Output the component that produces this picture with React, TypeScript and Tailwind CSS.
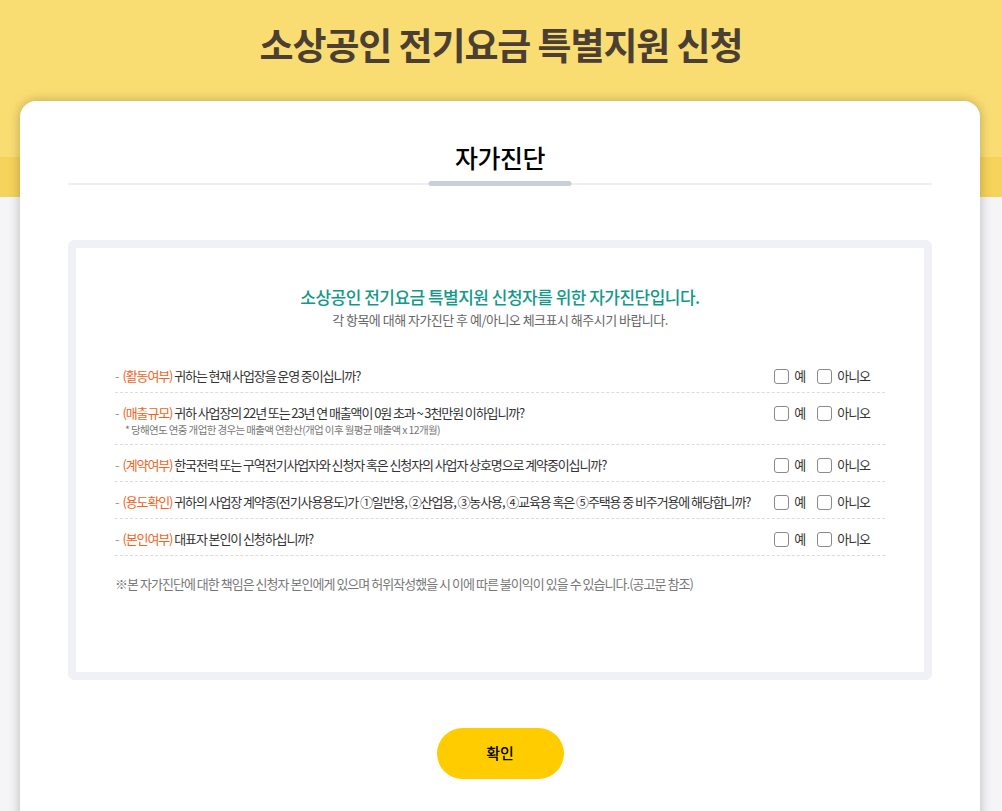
const FONT = "font-['Noto_Sans_CJK_KR','Noto_Sans',sans-serif]"

interface Question {
  tag: string
  text: string
  note?: string
}

const QUESTIONS: Question[] = [
  { tag: '(활동여부)', text: '귀하는 현재 사업장을 운영 중이십니까?' },
  {
    tag: '(매출규모)',
    text: '귀하 사업장의 22년 또는 23년 연 매출액이 0원 초과 ~ 3천만원 이하입니까?',
    note: '* 당해연도 연중 개업한 경우는 매출액 연환산(개업 이후 월평균 매출액 x 12개월)',
  },
  { tag: '(계약여부)', text: '한국전력 또는 구역전기사업자와 신청자 혹은 신청자의 사업자 상호명으로 계약중이십니까?' },
  {
    tag: '(용도확인)',
    text: '귀하의 사업장 계약종(전기사용용도)가 ①일반용, ②산업용, ③농사용, ④교육용 혹은 ⑤주택용 중 비주거용에 해당합니까?',
  },
  { tag: '(본인여부)', text: '대표자 본인이 신청하십니까?' },
]

function Check({ label }: { label: string }) {
  return (
    <label className="flex items-center gap-[5px] cursor-pointer">
      <span className="w-[15px] h-[15px] rounded-[3px] border border-[#8a8a8a] bg-white" />
      <span className="text-[13px] leading-[20px] text-[#333] tracking-[-0.08em]">{label}</span>
    </label>
  )
}

function QuestionRow({ q }: { q: Question }) {
  return (
    <div className="flex items-start justify-between border-b border-dashed border-[#dcdcdc] pt-[10px] pb-[6px] pr-[15px]">
      <div className="min-w-0">
        <p className="text-[13px] leading-[20px] text-[#333] tracking-[-0.085em] whitespace-nowrap">
          <span className="text-[#999] mr-[4px]">-</span>
          <span className="text-[#f26322]">{q.tag}</span> {q.text}
        </p>
        {q.note && (
          <p className="pl-[10px] text-[10.5px] leading-[14px] text-[#777] tracking-[-0.06em] pb-[1px]">{q.note}</p>
        )}
      </div>
      <div className="flex items-center gap-[12px] flex-shrink-0">
        <Check label="예" />
        <Check label="아니오" />
      </div>
    </div>
  )
}

export default function App() {
  return (
    <div
      className={`${FONT} min-h-[811px] bg-[linear-gradient(to_bottom,#fadd72_0px,#fadd72_157px,#f6d35b_157px,#f6d35b_197px,#f5f5f7_197px)]`}
    >
      {/* 상단 타이틀 */}
      <header className="h-[101px] flex items-center justify-center pb-[11px]">
        <h1 className="text-[37px] font-bold text-[#4b3f33] tracking-[-0.03em]">소상공인 전기요금 특별지원 신청</h1>
      </header>

      {/* 카드 */}
      <div className="ml-[20px] mr-[22px] bg-white rounded-t-[16px] shadow-[0_0_12px_rgba(0,0,0,0.25)] px-[48px] pt-[38px] pb-[60px]">
        <h2 className="text-center text-[25px] leading-[36px] font-medium text-black tracking-[-0.02em]">자가진단</h2>

        <div className="relative mt-[6px] h-[5px] flex items-center">
          <div className="w-full h-[2px] bg-[#eeeff3]" />
          <div className="absolute left-1/2 -translate-x-1/2 top-0 w-[143px] h-[5px] rounded-full bg-[#c8ceda]" />
        </div>

        {/* 자가진단 박스 */}
        <section className="mt-[54px] border-[8px] border-[#f0f1f6] rounded-[6px] px-[39px] pt-[37px] pb-[78px]">
          <div className="text-center">
            <p className="text-[17px] leading-[24px] text-[#13998b] font-medium tracking-[-0.03em]">
              소상공인 전기요금 특별지원 신청자를 위한 자가진단입니다.
            </p>
            <p className="mt-[2px] text-[13px] leading-[18px] text-[#666] tracking-[-0.04em]">
              각 항목에 대해 자가진단 후 예/아니오 체크표시 해주시기 바랍니다.
            </p>
          </div>

          <div className="mt-[27px]">
            {QUESTIONS.map((q) => (
              <QuestionRow key={q.tag} q={q} />
            ))}
          </div>

          <p className="mt-[18px] text-[13px] leading-[20px] text-[#777] tracking-[-0.075em]">
            ※본 자가진단에 대한 책임은 신청자 본인에게 있으며 허위작성했을 시 이에 따른 불이익이 있을 수 있습니다.(공고문 참조)
          </p>
        </section>

        <div className="mt-[48px] flex justify-center">
          <button className="w-[127px] h-[51px] rounded-full bg-[#ffcc00] text-[15px] font-medium text-black">
            확인
          </button>
        </div>
      </div>
    </div>
  )
}
